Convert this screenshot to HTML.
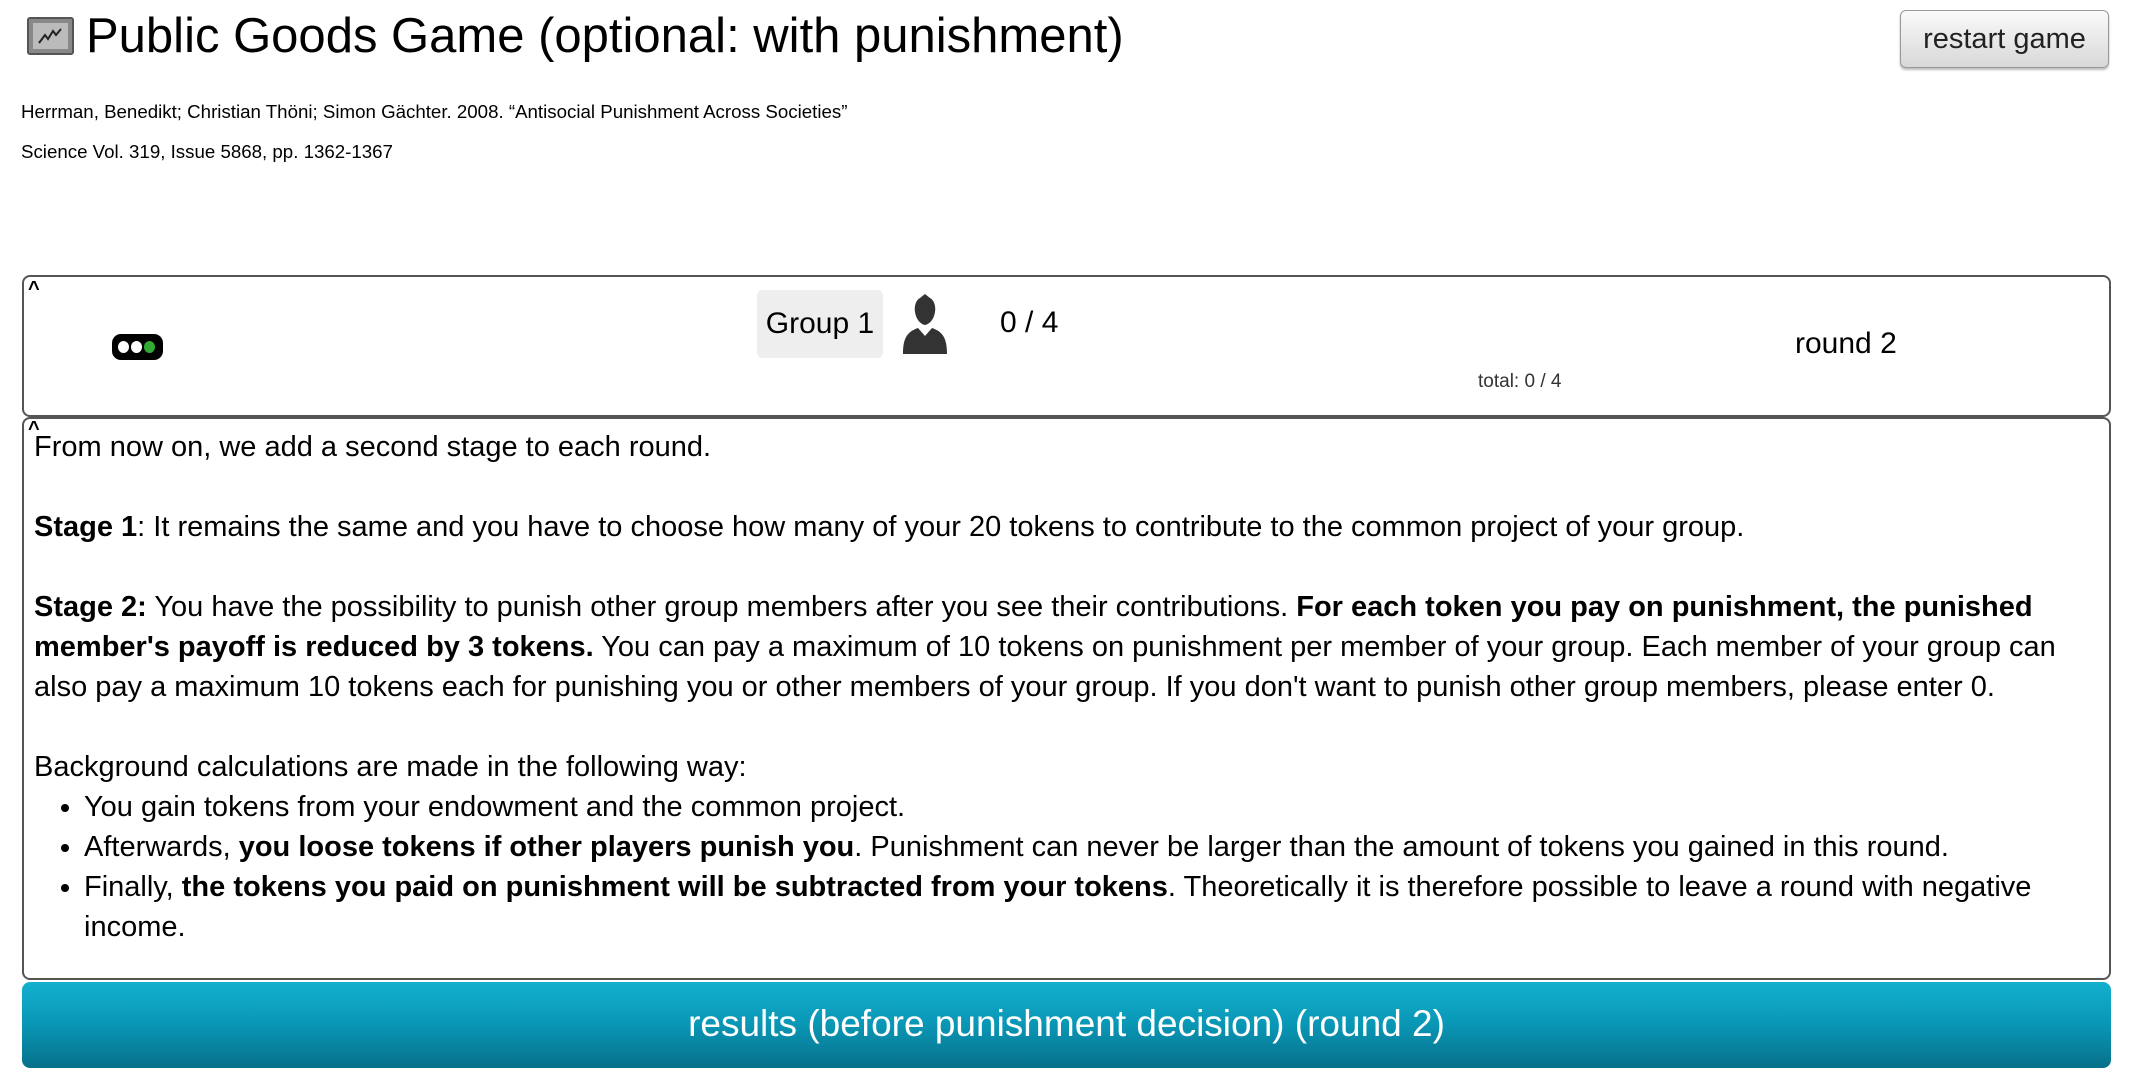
<!DOCTYPE html>
<html><head><meta charset="utf-8"><style>
body{margin:0;width:2132px;height:1076px;background:#fff;font-family:"Liberation Sans",sans-serif;color:#000;position:relative;overflow:hidden}
.a{position:absolute}
.btn{left:1900px;top:10px;width:207px;height:56px;border:1px solid #999;border-radius:6px;background:linear-gradient(#fafafa,#d8d8d8);font-size:29px;text-align:center;line-height:56px;color:#222;box-shadow:0 2px 2px #bbb}
.p1{left:22px;top:275px;width:2085px;height:138px;border:2px solid #555;border-radius:8px}
.p2{left:22px;top:417px;width:2085px;height:559px;border:2px solid #555;border-radius:8px}
.txt{left:34px;top:427px;width:2070px;font-size:29px;line-height:40px}
.txt ul{margin:0;padding-left:50px}
.go{left:22px;top:982px;width:2089px;height:86px;border-radius:8px;background:linear-gradient(#14b0cf,#0996b5 50%,#07708a);color:#fff;font-size:37px;text-align:center;line-height:84px}
</style></head><body>
<div class="a" style="left:27px;top:17px;width:47px;height:38px;background:#888;border:2px solid #555;box-sizing:border-box;border-radius:3px">
<svg width="43" height="34" style="position:absolute;left:0;top:0"><rect x="4" y="4" width="35" height="26" fill="#bbb"/><path d="M10 24 L16 16 L19 20 L24 12 L27 16 L32 10" stroke="#222" stroke-width="2" fill="none"/></svg></div>
<div class="a" style="left:86px;top:4px;font-size:49px;line-height:64px">Public Goods Game (optional: with punishment)</div>
<div class="a btn">restart game</div>
<div class="a" style="left:21px;top:101px;font-size:18.7px">Herrman, Benedikt; Christian Thöni; Simon Gächter. 2008. “Antisocial Punishment Across Societies”</div>
<div class="a" style="left:21px;top:141px;font-size:18.7px">Science Vol. 319, Issue 5868, pp. 1362-1367</div>
<div class="a p1"></div>
<div class="a" style="left:28px;top:278px;font-size:20px;font-weight:bold">^</div>
<div class="a" style="left:112px;top:334px;width:51px;height:26px;background:#000;border-radius:9px">
<span class="a" style="left:6px;top:7px;width:11px;height:12px;border-radius:50%;background:#fff"></span>
<span class="a" style="left:19px;top:7px;width:11px;height:12px;border-radius:50%;background:#fff"></span>
<span class="a" style="left:32px;top:7px;width:11px;height:12px;border-radius:50%;background:#3a3"></span></div>
<div class="a" style="left:757px;top:290px;width:126px;height:68px;background:#eee;border-radius:6px;font-size:30px;line-height:68px;text-align:center">Group 1</div>
<svg class="a" style="left:900px;top:292px" width="50" height="62"><path d="M25 2 L30 6 C34 8 36 14 35 20 C34 27 30 32 25 33 C20 32 16 27 15 20 C14 14 16 8 20 6Z" fill="#333"/><path d="M3 62 C3 48 6 40 18 36 L25 44 L32 36 C44 40 47 48 47 62Z" fill="#333"/></svg>
<div class="a" style="left:1000px;top:306px;font-size:30px">0 / 4</div>
<div class="a" style="left:1795px;top:327px;font-size:30px">round 2</div>
<div class="a" style="left:1478px;top:371px;font-size:19px;color:#333">total: 0 / 4</div>
<div class="a p2"></div>
<div class="a" style="left:28px;top:418px;font-size:20px;font-weight:bold">^</div>
<div class="a txt">From now on, we add a second stage to each round.<br><br>
<b>Stage 1</b>: It remains the same and you have to choose how many of your 20 tokens to contribute to the common project of your group.<br><br>
<b>Stage 2:</b> You have the possibility to punish other group members after you see their contributions. <b>For each token you pay on punishment, the punished member's payoff is reduced by 3 tokens.</b> You can pay a maximum of 10 tokens on punishment per member of your group. Each member of your group can also pay a maximum 10 tokens each for punishing you or other members of your group. If you don't want to punish other group members, please enter 0.<br><br>
Background calculations are made in the following way:
<ul><li>You gain tokens from your endowment and the common project.</li>
<li>Afterwards, <b>you loose tokens if other players punish you</b>. Punishment can never be larger than the amount of tokens you gained in this round.</li>
<li>Finally, <b>the tokens you paid on punishment will be subtracted from your tokens</b>. Theoretically it is therefore possible to leave a round with negative income.</li></ul></div>
<div class="a go">results (before punishment decision) (round 2)</div>
</body></html>
